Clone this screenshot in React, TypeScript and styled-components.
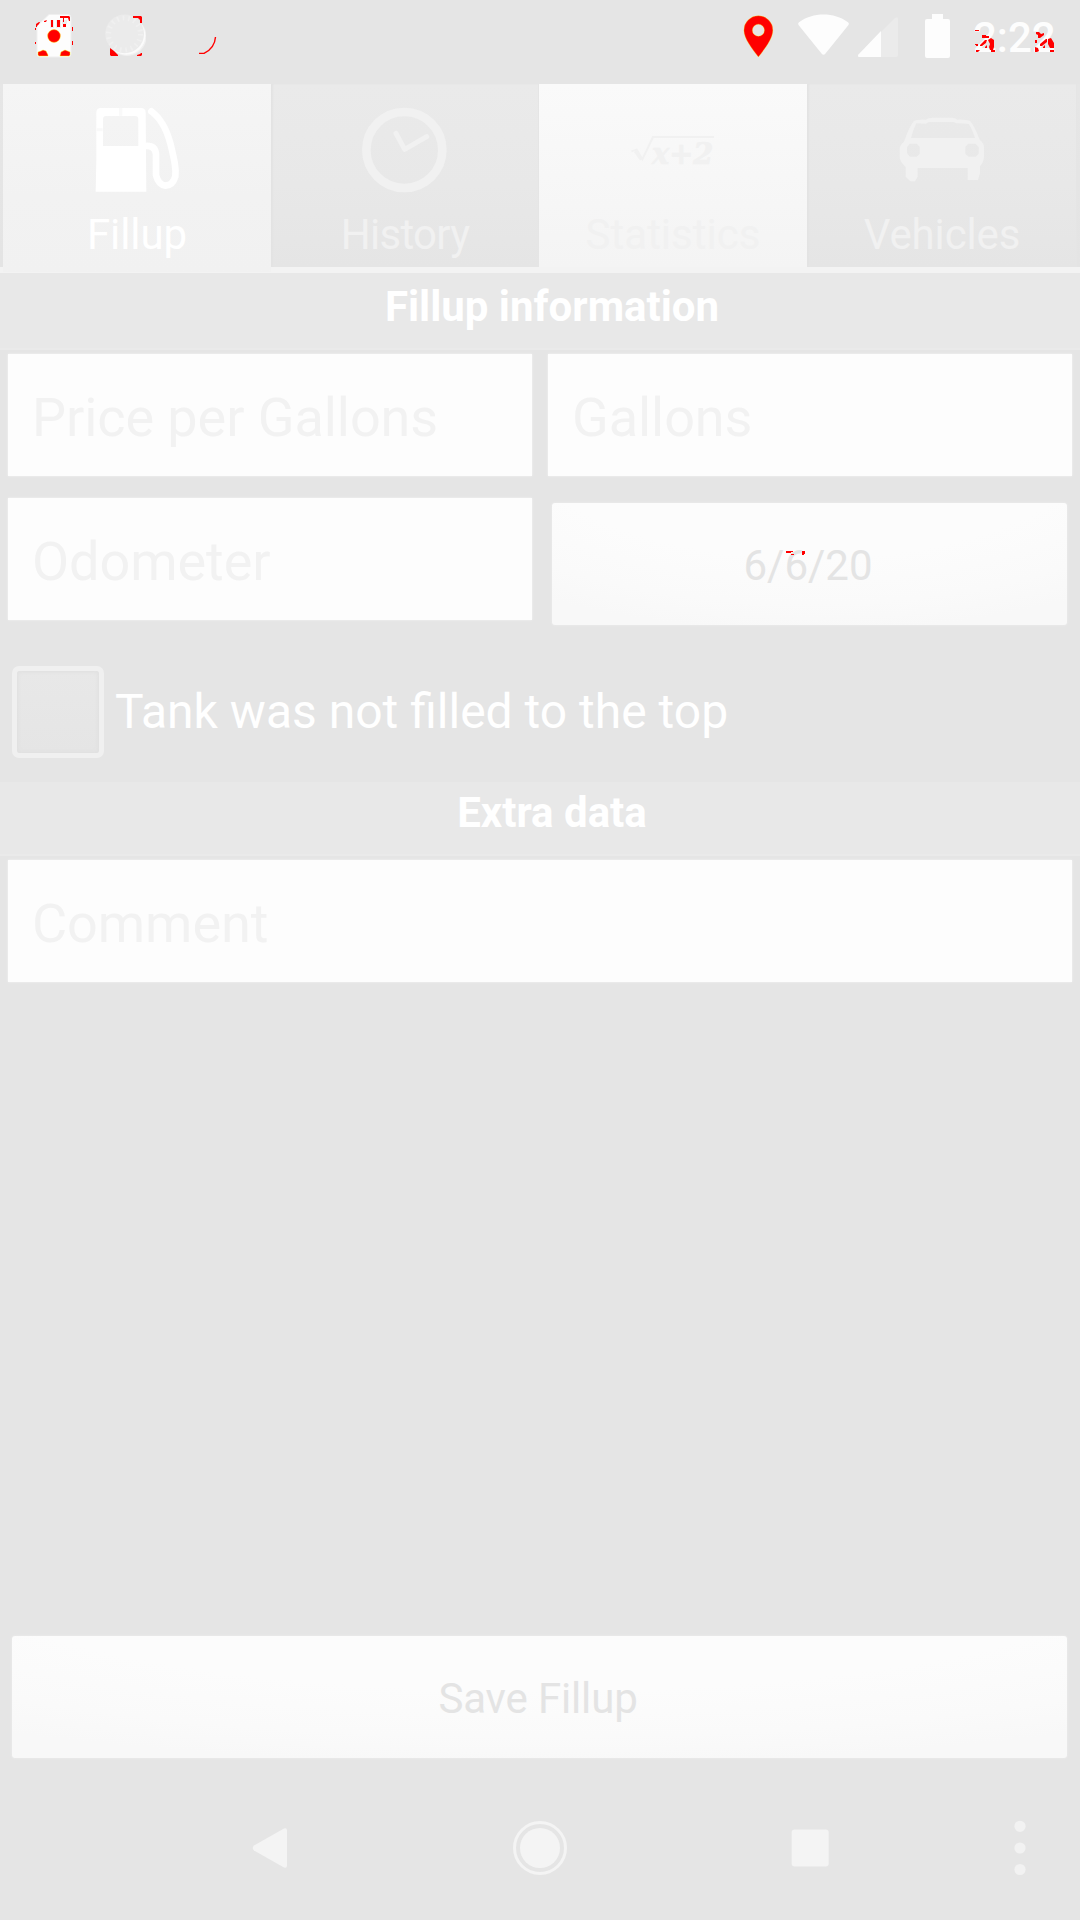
import React from "react";
import styled, { createGlobalStyle } from "styled-components";

const GlobalStyle = createGlobalStyle`
  * { box-sizing: border-box; }
  body { margin: 0; background: #e5e5e5; }
  button, input { font: inherit; border: 0; margin: 0; outline: 0; }
`;

const Screen = styled.div`
  display: flex;
  flex-direction: column;
  width: 1080px;
  height: 1920px;
  overflow: hidden;
  background: #e5e5e5;
  font-family: Roboto, "Liberation Sans", sans-serif;
`;

const StatusBar = styled.header`
  display: flex;
  justify-content: space-between;
  height: 84px;
  padding: 12px 24px 0 34px;
`;

const StatusGroup = styled.div<{ $gap?: number }>`
  display: flex;
  gap: ${(p) => p.$gap ?? 0}px;
  height: 48px;

  svg { display: block; flex: none; }
`;

const Clock = styled.div`
  position: relative;
  width: 84px;
  margin-right: -1px;
  padding-top: 1px;
  color: #fdfdfd;
  font-size: 42px;
  font-weight: 500;
  line-height: 50px;
  white-space: nowrap;
`;

const Flecks = styled.svg<{ $left: number; $top: number }>`
  position: absolute;
  left: ${(p) => p.$left}px;
  top: ${(p) => p.$top}px;
`;

const Tabs = styled.nav`
  display: grid;
  grid-template-columns: repeat(3, 268px) 270px;
  height: 189px;
  padding: 0 3px;
  background: linear-gradient(#e6e6e6, #e4e4e4);
  border-bottom: 6px solid #f3f3f3;
`;

type Tone = "active" | "dim" | "bright";
const tones: Record<Tone, { bg: string; fg: string }> = {
  active: { bg: "linear-gradient(#f5f5f5, #f2f2f2 60%, #f1f1f1)", fg: "#ffffff" },
  dim: { bg: "linear-gradient(#eaeaea, #e8e8e8 55%, #e5e5e5)", fg: "#f1f1f1" },
  bright: { bg: "linear-gradient(#fafafa, #f7f7f7 50%, #f4f4f4)", fg: "#f1f1f1" },
};

const Tab = styled.button<{ $tone: Tone }>`
  display: flex;
  flex-direction: column;
  align-items: center;
  height: ${(p) => (p.$tone === "active" ? 188 : 183)}px;
  padding: 22px 0 0;
  background: ${(p) => tones[p.$tone].bg};
  color: ${(p) => tones[p.$tone].fg};
  box-shadow: ${(p) => (p.$tone === "dim" ? "inset 2px 0 2px #e3e3e3, inset -1px 0 1px #e5e5e5" : "none")};

  svg { display: block; flex: none; }
`;

const TabLabel = styled.span<{ $spacing: number }>`
  margin-top: 16px;
  font-size: 42px;
  line-height: 50px;
  letter-spacing: ${(p) => p.$spacing}px;
`;

const SectionTitle = styled.h2<{ $height: number; $shift: number }>`
  height: ${(p) => p.$height}px;
  margin: 0;
  padding: ${(p) => p.$shift}px 0 0 24px;
  background: #e8e8e8;
  border-bottom: 2px solid #eaeaea;
  color: #ffffff;
  font-size: 42px;
  font-weight: 700;
  line-height: 50px;
  text-align: center;
`;

const Fields = styled.section`
  display: grid;
  grid-template-columns: 524px 524px;
  gap: 22px 16px;
  padding: 4px 8px 0;
`;

const Field = styled.input`
  width: 100%;
  height: 122px;
  padding: 5px 24px 0;
  background: #fdfdfd;
  box-shadow: 0 0 2px #f4f4f4;
  font-size: 54px;
  letter-spacing: -0.07px;

  &::placeholder { color: #f2f2f2; opacity: 1; }
`;

const PlainButton = styled.button`
  position: relative;
  height: 122px;
  padding: 3px 3px 0 0;
  border-radius: 3px;
  background: radial-gradient(ellipse 90% 150% at 50% -45%, #fcfcfc 60%, #fafafa 85%, #f8f8f8);
  box-shadow: 0 0 2px #efefef;
  color: #e4e4e4;
  font-size: 42px;
  line-height: 50px;
`;

const DateButton = styled(PlainButton)`
  margin: 5px 5px -5px 4px;
`;

const SaveButton = styled(PlainButton)`
  margin: auto 13px 18px 12px;
  letter-spacing: -0.15px;
`;

const CheckRow = styled.label`
  display: flex;
  align-items: center;
  gap: 11px;
  height: 162px;
  padding: 22px 0 0 12px;
  color: #ffffff;
  font-size: 48px;
  line-height: 56px;
`;

const CheckBox = styled.span`
  width: 92px;
  height: 92px;
  border: 5px solid #f0f0f0;
  border-radius: 7px;
  background: linear-gradient(#e8e8e8, #e5e5e5);
  box-shadow: inset 0 0 4px 1px #dfdfdf;
`;

const CommentArea = styled.section`
  padding: 4px 8px 0;
`;

const NavBar = styled.footer`
  display: grid;
  grid-template-columns: repeat(3, 270px) 149px;
  place-items: center;
  flex: none;
  height: 144px;
  padding-left: 135px;
`;

const SdCardIcon = () => (
  <svg width="42" height="48" viewBox="34 12 42 48">
    <path d="M49 14.5h19q3 0 3 3V54q0 3-3 3H40q-3 0-3-3V26z" fill="#fdfdfd" stroke="#efefef" />
    <path d="M50 20h4v8h-4zM56 20h5v8h-5zM62 20h5v4h-5z" fill="#eeeeee" />
    <g fill="#ff0000" stroke="#ffff00" strokeWidth=".4">
      <circle cx="54" cy="36" r="6.4" />
      <path d="M38 52l3-1 2-1 3 1 2 4v1h-9l-1-1zM60 56l1-4 4-2 5 2v3l-1 1z" />
    </g>
    <path
      d="M51 20h2v7h-2zM57 20h3v7h-3zM63 24h3v3h-3zM60 16h9l1 1v4h-1l-1-3h-4v4h-1v-4h-3zM36 26v-2l3-2h1l-1 2-2 2v1h-1zM44 21l3-1-1 2h-2zM72 27h1v4h-1zM72 41h1v4h-1zM35 28h1v2h-1zM35 42h1v2h-1z"
      fill="#ff0000"
    />
  </svg>
);

const DialIcon = () => (
  <svg width="42" height="48" viewBox="104 12 42 48">
    <circle cx="127" cy="36.5" r="19.5" fill="#f0f0f0" />
    <circle cx="126.4" cy="35.8" r="19" fill="#fbfbfb" />
    <circle cx="124.6" cy="33.8" r="19.4" fill="#ebebeb" />
    <circle cx="124.5" cy="34" r="16" fill="none" stroke="#f0f0f0" strokeWidth="5" strokeDasharray="1.6 4.02" />
    <path d="M133 16h8l1 1v6h-2v-3l-2-2h-5zM110 48l4 3 4 4v1h-7l-1-1zM142 53v2l-1 1h-4v-1l3-1 1-1z" fill="#ff0000" />
  </svg>
);

const CrescentIcon = () => (
  <svg width="44" height="48" viewBox="174 12 44 48">
    <path d="M199 53.4h5C210 50.5 215 44.5 215.5 37" fill="none" stroke="#ff0000" strokeWidth="1.4" />
  </svg>
);

const PinIcon = () => (
  <svg width="50" height="48" viewBox="738 12 50 48">
    <path
      fillRule="evenodd"
      d="M758.4 57C752 48.500 743.900 38.500 743.900 30.200a14.500 14.500 0 0 1 29 0C772.900 38.500 765 48.500 758.400 57zM758.400 24.200a6 6 0 1 0 0 12a6 6 0 1 0 0-12z"
      fill="#ff0000"
      stroke="#ffff00"
      strokeWidth=".3"
    />
  </svg>
);

const WifiIcon = () => (
  <svg width="66" height="48" viewBox="788 12 66 48">
    <path d="M798.500 25q-1-1.500.5-2.700C813 12 834 12 848 22.300q1.500 1.200.5 2.700L825.500 53.500q-2 2.500-4 0z" fill="#fdfdfd" />
  </svg>
);

const SignalIcon = () => (
  <svg width="54" height="48" viewBox="854 12 54 48">
    <path d="M859 57q-2-.5-.5-2.500L895 18q3-2 3 1v36q0 2-2 2z" fill="#ebebeb" />
    <path d="M881 31v26h-21.500q-2.500-.5-1-2.500z" fill="#fdfdfd" />
  </svg>
);

const BatteryIcon = () => (
  <svg width="65" height="48" viewBox="908 12 65 48">
    <path d="M932 14h11v5h5q2 0 2 2v35q0 2-2 2h-21q-2 0-2-2V21q0-2 2-2h5z" fill="#fdfdfd" />
  </svg>
);

const FuelIcon = () => (
  <svg width="88" height="88" viewBox="280 78 264 264" fill="#ffffff">
    <path fillRule="evenodd" d="M290 98q0-14 14-14H424q14 0 14 14L440 335H288L290 240zM320 108q-10 0-10 10V198H416V118q0-10-10-10z" />
    <path d="M358 84h10v23h-10zM291 145h18v9h-18z" fill="#f9f9f9" />
    <path d="M455 94C480 112 500 145 512 190C524 240 530 265 527 290Q518 317 498 317Q476 315 469 285V222Q466 196 438 198" fill="none" stroke="#ffffff" strokeWidth="20" strokeLinecap="round" strokeLinejoin="round" />
  </svg>
);

const ClockIcon = () => (
  <svg width="88" height="88" viewBox="305 78 264 264" fill="none" stroke="#f1f1f1">
    <circle cx="435" cy="210" r="114" strokeWidth="26" />
    <path d="M410 160L436 208L502 170" strokeWidth="15" strokeLinecap="round" strokeLinejoin="round" />
  </svg>
);

const FormulaIcon = () => (
  <svg width="88" height="88" viewBox="299 78 264 264">
    <path d="M306 214L322 209L339 238L371 171H554" fill="none" stroke="#f1f1f1" strokeWidth="6" />
    <path d="M318 213L336 239" stroke="#f1f1f1" strokeWidth="10" />
    <text x="368" y="252" textLength="184" lengthAdjust="spacingAndGlyphs" fontFamily="'DejaVu Serif', serif" fontStyle="italic" fontWeight="700" fontSize="92" fill="#f1f1f1" stroke="#f1f1f1" strokeWidth="2">
      x+2
    </text>
  </svg>
);

const CarIcon = () => (
  <svg width="88" height="88" viewBox="325 78 264 264" fill="#f1f1f1">
    <path
      fillRule="evenodd"
      d="M372 124Q380 118 408 119Q416 113 430 113H486Q496 113 503 119Q532 118 542 124Q552 134 571 181Q583 190 583 202V230Q583 244 571 259V280L565 300H534V264H384V290L376 304H362L348 290V261Q330 245 330 232V206Q331 194 343 185Q358 142 372 124ZM380 130Q371 148 364 174H556Q547 146 537 132Q516 129 500 130L492 126H418L408 131ZM360 191L352 202V219L361 230H381L390 221V200L381 191ZM536 191L527 200V221L537 230H558L567 221V201L557 191Z"
    />
  </svg>
);

const tabs: { label: string; tone: Tone; spacing: number; Icon: React.FC }[] = [
  { label: "Fillup", tone: "active", spacing: -0.1, Icon: FuelIcon },
  { label: "History", tone: "dim", spacing: -0.7, Icon: ClockIcon },
  { label: "Statistics", tone: "bright", spacing: 0, Icon: FormulaIcon },
  { label: "Vehicles", tone: "dim", spacing: -0.15, Icon: CarIcon },
];

export default function App() {
  return (
    <Screen>
      <GlobalStyle />
      <StatusBar>
        <StatusGroup $gap={28}>
          <SdCardIcon />
          <DialIcon />
          <CrescentIcon />
        </StatusGroup>
        <StatusGroup>
          <PinIcon />
          <WifiIcon />
          <SignalIcon />
          <BatteryIcon />
          <Clock>
            2:22
            <Flecks $left={0} $top={16} width="84" height="28" viewBox="973 28 84 28" fill="#ff0000">
              <path d="M975 30h4v1h-4zM975 44h3v2h-2v-1h-1zM982 35h4v3h-4zM986 36h3v2h-3zM980 45l5-5h2l-1 3-4 3h-2zM988 40l3-2 3 2v7l-1 3h-3l-1-3 1-3zM976 50h4l-2 2h-2zM985 47l2-2v3h-2zM991 50h4v2h-4z" />
              <path d="M1036 32h3l2 2 3-1v2l-4 3h-2v-3l-2-1zM1035 40h2v3h-2zM1040 44l6-5h1v3l-5 4h-2zM1048 39l3-1 3 5v5h-4l-2-4zM1035 47l3 1 1 3-2 1h-2zM1043 47l2-2v3h-2zM1050 50h4v2h-4z" />
            </Flecks>
          </Clock>
        </StatusGroup>
      </StatusBar>

      <Tabs>
        {tabs.map(({ label, tone, spacing, Icon }) => (
          <Tab key={label} $tone={tone}>
            <Icon />
            <TabLabel $spacing={spacing}>{label}</TabLabel>
          </Tab>
        ))}
      </Tabs>

      <SectionTitle $height={77} $shift={9}>Fillup information</SectionTitle>
      <Fields>
        <Field placeholder="Price per Gallons" />
        <Field placeholder="Gallons" />
        <Field placeholder="Odometer" />
        <DateButton>
          6/6/20
          <Flecks $left={234} $top={46} width="20" height="8" viewBox="786 549 20 8" fill="#ff0000">
            <path d="M786 551h7v1h-2v1h-5zM791 554h3v1h-3zM802 551h3v3h-1v1h-2z" />
          </Flecks>
        </DateButton>
      </Fields>
      <CheckRow>
        <CheckBox />
        Tank was not filled to the top
      </CheckRow>

      <SectionTitle $height={74} $shift={6}>Extra data</SectionTitle>
      <CommentArea>
        <Field placeholder="Comment" />
      </CommentArea>

      <SaveButton>Save Fillup</SaveButton>

      <NavBar>
        <svg width="60" height="60" viewBox="240 1818 60 60">
          <path d="M284 1828.500q3-1 3 2v35q0 3-3 2l-30-17q-2.500-2.500 0-5z" fill="#f4f4f4" />
        </svg>
        <svg width="60" height="60" viewBox="510 1818 60 60">
          <circle cx="540" cy="1848" r="25.500" fill="none" stroke="#f4f4f4" strokeWidth="3" />
          <circle cx="540" cy="1848" r="20" fill="#f4f4f4" />
        </svg>
        <svg width="60" height="60" viewBox="780 1818 60 60">
          <rect x="791.700" y="1829.500" width="37" height="37" rx="3" fill="#f4f4f4" />
        </svg>
        <svg width="60" height="60" viewBox="989.500 1818 60 60" fill="#f2f2f2">
          <circle cx="1019.500" cy="1826.300" r="5.600" />
          <circle cx="1019.500" cy="1848" r="5.600" />
          <circle cx="1019.500" cy="1869.500" r="5.600" />
        </svg>
      </NavBar>
    </Screen>
  );
}
